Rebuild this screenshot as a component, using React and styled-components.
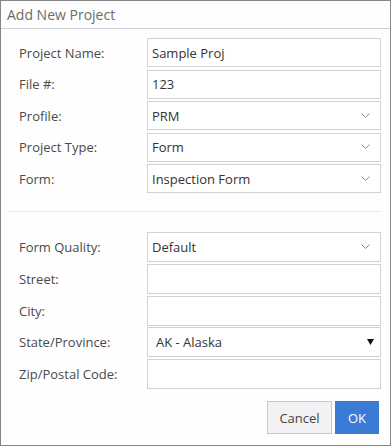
import React from 'react'
import styled, { createGlobalStyle } from 'styled-components'

const GlobalStyle = createGlobalStyle`
  html, body {
    margin: 0;
    padding: 0;
    background: #ffffff;
  }
  body {
    font-family: "Open Sans", "Liberation Sans", sans-serif;
    -webkit-font-smoothing: none;
  }
`

const Dialog = styled.div`
  box-sizing: border-box;
  width: 391px;
  height: 446px;
  border: 1px solid #858585;
  background: #fefefe;
  display: flex;
  flex-direction: column;
`

const Header = styled.div`
  height: 27px;
  border-bottom: 1px solid #cdd1d6;
  padding-left: 6px;
  display: flex;
  align-items: center;
  font-size: 14px;
  color: #6b6b6b;
`

const Body = styled.div`
  padding: 9px 8px 0 7px;
  display: flex;
  flex-direction: column;
  flex: 1;
`

const Section = styled.div`
  display: flex;
  flex-direction: column;
  gap: ${p => p.$gap}px;
`

const Row = styled.div`
  display: grid;
  grid-template-columns: 128px 1fr;
  align-items: center;
  padding: 0 1px 0 11px;
  height: ${p => p.$h}px;
`

const Label = styled.label`
  font-size: 13px;
  color: #4a4a4a;
`

const Field = styled.div`
  position: relative;
  box-sizing: border-box;
  height: 100%;
  border: 1px solid #d2d2d2;
  background: #fff;
  display: flex;
  align-items: center;
  padding-left: ${p => (p.$wide ? 8 : 4)}px;
  font-size: 13px;
  color: #333;
`

const Input = styled.input`
  border: none;
  outline: none;
  width: 100%;
  padding: 0;
  font: inherit;
  color: inherit;
  background: transparent;
`

const Caret = styled.span`
  position: absolute;
  right: ${p => p.$right}px;
  top: 50%;
  transform: translateY(-50%);
  display: flex;
`

const Divider = styled.hr`
  border: none;
  height: 1px;
  background: #ececec;
  margin: 18px 0 20px;
`

const Footer = styled.div`
  margin-top: 12px;
  padding-right: 3px;
  display: flex;
  justify-content: flex-end;
  gap: 3px;
`

const Button = styled.button`
  box-sizing: border-box;
  height: 33px;
  width: ${p => p.$w}px;
  font-family: inherit;
  font-size: 13px;
  border: 1px solid ${p => (p.$primary ? '#3a7bd5' : '#c9c9cc')};
  background: ${p => (p.$primary ? '#3a7bd5' : '#f3f1f4')};
  color: ${p => (p.$primary ? '#ffffff' : '#444')};
  padding: 0;
`

const Chevron = () => (
  <svg width="9" height="6" viewBox="0 0 9 6">
    <path d="M0.5 0.5 L4.5 4.5 L8.5 0.5" fill="none" stroke="#8a8a8a" strokeWidth="1" />
  </svg>
)

const Triangle = () => (
  <svg width="7" height="6" viewBox="0 0 7 6">
    <path d="M0 0 H7 L3.5 6 Z" fill="#111" />
  </svg>
)

const TextRow = ({ label, value, h }) => (
  <Row $h={h}>
    <Label>{label}</Label>
    <Field>
      <Input defaultValue={value} />
    </Field>
  </Row>
)

const SelectRow = ({ label, value, h, native }) => (
  <Row $h={h}>
    <Label>{label}</Label>
    <Field $wide={native}>
      {value}
      <Caret $right={native ? 6 : 10}>{native ? <Triangle /> : <Chevron />}</Caret>
    </Field>
  </Row>
)

export default function App() {
  return (
    <>
      <GlobalStyle />
      <Dialog>
        <Header>Add New Project</Header>
        <Body>
          <Section $gap={2.5}>
            <TextRow h={29} label="Project Name:" value="Sample Proj" />
            <TextRow h={29} label="File #:" value="123" />
            <SelectRow h={29} label="Profile:" value="PRM" />
            <SelectRow h={29} label="Project Type:" value="Form" />
            <SelectRow h={29} label="Form:" value="Inspection Form" />
          </Section>
          <Divider />
          <Section $gap={1.75}>
            <SelectRow h={30} label="Form Quality:" value="Default" />
            <TextRow h={30} label="Street:" value="" />
            <TextRow h={30} label="City:" value="" />
            <SelectRow h={30} label="State/Province:" value="AK - Alaska" native />
            <TextRow h={30} label="Zip/Postal Code:" value="" />
          </Section>
          <Footer>
            <Button $w={65}>Cancel</Button>
            <Button $w={44} $primary>OK</Button>
          </Footer>
        </Body>
      </Dialog>
    </>
  )
}
